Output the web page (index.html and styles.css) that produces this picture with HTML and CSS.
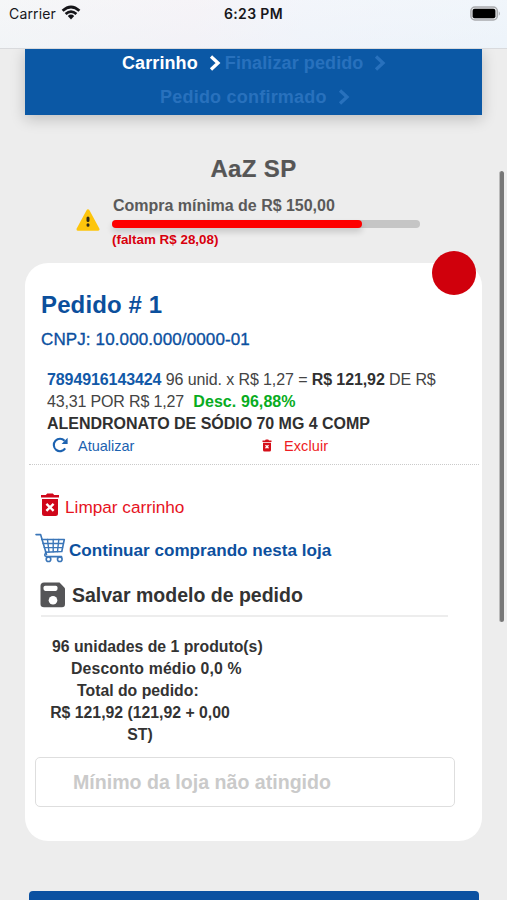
FILE: index.html
```html
<!DOCTYPE html>
<html lang="pt-BR">
<head>
<meta charset="utf-8">
<title>Carrinho</title>
<link rel="stylesheet" href="styles.css">
</head>
<body>
<header class="status">
  <div class="carrier"><span>Carrier</span>
    <svg class="wifi" width="20" height="16" viewBox="0 0 20 16"><g fill="none" stroke="#151519" stroke-width="2.8"><path d="M1.6 5.8Q10-1.8 18.4 5.8"/><path d="M4.6 9Q10 4.3 15.4 9"/></g><path fill="#151519" d="M6.8 11Q10 8.2 13.2 11L10 14.4Z"/></svg>
  </div>
  <span class="clock">6:23 PM</span>
  <svg class="battery" width="31" height="15" viewBox="0 0 31 15"><rect x=".9" y="1" width="26.4" height="13" rx="4" fill="#e4e6e8" stroke="#a9abae" stroke-width="1.5"/><rect x="2.6" y="2.8" width="22.8" height="9.4" rx="2" fill="#000"/><path d="M28.8 5.2Q31 7.5 28.8 9.8Z" fill="#a9abae"/></svg>
</header>
<main class="page">
  <nav class="steps">
    <div class="step-row"><span class="active">Carrinho</span><svg class="chev on" width="12" height="16" viewBox="0 0 12 16"><path d="M2 1.5L9 8L2 14.5"/></svg><span>Finalizar pedido</span><svg class="chev off" width="12" height="16" viewBox="0 0 12 16"><path d="M2 1.5L9 8L2 14.5"/></svg></div>
    <div class="step-row second"><span>Pedido confirmado</span><svg class="chev off" width="12" height="16" viewBox="0 0 12 16"><path d="M2 1.5L9 8L2 14.5"/></svg></div>
  </nav>
  <h1 class="store">AaZ SP</h1>
  <section class="minimum">
    <svg class="warn" width="24" height="22" viewBox="0 0 24 22"><path d="M12 1.8L22 20.2H2Z" fill="#fdc50c" stroke="#fdc50c" stroke-width="3" stroke-linejoin="round"/><path d="M12 9V11.4M12 15.8V16.2" stroke="#2d2817" stroke-width="3" stroke-linecap="round"/></svg>
    <div class="min-body">
      <p class="min-label">Compra mínima de R$ 150,00</p>
      <div class="track"><div class="fill" style="width:81.28%"></div></div>
      <p class="missing">(faltam R$ 28,08)</p>
    </div>
  </section>
  <section class="card">
    <span class="dot"></span>
    <h2>Pedido # 1</h2>
    <p class="cnpj">CNPJ: 10.000.000/0000-01</p>
    <div class="item">
      <p><b class="code">7894916143424</b> 96 unid. x R$ 1,27 = <b>R$ 121,92</b> DE R$<br><span class="price">43,31 POR R$ 1,27</span> <b class="discount">Desc. 96,88%</b><br><b class="name">ALENDRONATO DE SÓDIO 70 MG 4 COMP</b></p>
      <div class="actions">
        <a class="update"><svg width="17" height="17" viewBox="0 0 17 17"><path d="M13.2 11.4A6.2 6.2 0 1 1 12.6 3.8" fill="none" stroke="#1c62b0" stroke-width="2.1"/><path d="M15.6 .8V7H9.6Z" fill="#1c62b0"/></svg><span>Atualizar</span></a>
        <a class="remove"><svg width="10" height="13" viewBox="0 0 20 24"><path d="M1 2H6L7.5 0H12.5L14 2H19V5H1ZM2 6.5H18V21Q18 24 15 24H5Q2 24 2 21Z" fill="#d50f19"/><path d="M7 11.5L13 17.5M13 11.5L7 17.5" stroke="#fff" stroke-width="2.6"/></svg><span>Excluir</span></a>
      </div>
    </div>
    <a class="row clear"><svg width="18" height="24" viewBox="0 0 18 24"><path d="M0 2H4.8L6.2 .6H11.8L13.2 2H18V4.4H0ZM1 6H17V20.5Q17 23 14.5 23H3.5Q1 23 1 20.5Z" fill="#d0061a"/><path d="M5.4 10.8L12.6 17.8M12.6 10.8L5.4 17.8" stroke="#fff" stroke-width="2.4"/></svg><span>Limpar carrinho</span></a>
    <a class="row continue"><svg width="31" height="30" viewBox="0 0 31 30"><g fill="none" stroke="#3b76b8" stroke-width="1.6" stroke-linejoin="round" stroke-linecap="round"><path d="M1 1.6H5.6L11.5 21.5"/><path d="M6.8 6.5H29.3L26.8 18.5L10.5 19.2"/><path d="M8 10.5H28.4M9.2 14.6H27.5M12.5 6.5L14 19M18.2 6.5V18.8M23.8 6.5L22.5 18.6" stroke-width="1.4"/><path d="M11.5 19.3Q8 22.3 11.5 23.6H26.5"/><circle cx="13.5" cy="26.2" r="2.3"/><circle cx="24.8" cy="26.2" r="2.3"/></g></svg><span>Continuar comprando nesta loja</span></a>
    <a class="row save"><svg width="26" height="26" viewBox="0 0 26 26"><path d="M4 .5H19.5L25 6.3V22Q25 25.2 22 25.2H4Q.5 25.2 .5 22V4Q.5.5 4 .5Z" fill="#555557"/><rect x="3.5" y="3.7" width="14" height="5.2" rx="1.8" fill="#fff"/><circle cx="13" cy="18.2" r="4.3" fill="#fff"/></svg><span>Salvar modelo de pedido</span></a>
    <div class="totals">
      <p class="t1">96 unidades de 1 produto(s)</p>
      <p class="t2">Desconto médio 0,0 %</p>
      <p class="t3">Total do pedido:</p>
      <p class="t4">R$ 121,92 (121,92 + 0,00<br>ST)</p>
    </div>
    <button class="disabled" disabled>Mínimo da loja não atingido</button>
  </section>
  <div class="bottom-button"></div>
</main>
<div class="scrollbar"></div>
</body>
</html>
```
FILE: styles.css
```css
* { box-sizing: border-box; }
body { margin: 0; width: 507px; height: 900px; overflow: hidden; background: #ededed; color: #333; font-family: "Liberation Sans", Arial, sans-serif; }
p, h1, h2 { margin: 0; }
svg { display: block; flex: none; }

.status { position: relative; z-index: 2; height: 48px; padding: 5px 9px 0; display: grid; grid-template-columns: 1fr auto 1fr; align-items: start; background: linear-gradient(175deg, rgba(255,255,255,.35), rgba(236,243,250,.4)), linear-gradient(90deg, #f0f2f4, #f3eff4 38%, #eff2f9 60%, #eef4fa); box-shadow: 0 1px 0 #d9dadd; font-family: Inter, sans-serif; font-size: 14px; line-height: 18px; color: #17171b; }
.carrier { display: flex; letter-spacing: .15px; }
.wifi { margin: 0 0 0 5px; }
.clock { font-weight: 600; letter-spacing: .35px; }
.battery { justify-self: end; margin: 1px -3px 0 0; }

.page { height: 852px; overflow: hidden; }
.steps { margin: 0 25px; height: 67px; padding-top: 2px; background: #0b58a5; box-shadow: 0 4px 14px rgba(0,0,0,.2); color: #2871bd; font-size: 18px; font-weight: 700; }
.step-row { display: flex; align-items: center; height: 26px; padding-left: 97px; letter-spacing: .1px; }
.step-row.second { margin-top: 8px; padding-left: 135px; letter-spacing: .22px; }
.active { color: #fff; }
.chev path { fill: none; stroke: currentColor; stroke-width: 3.3; }
.chev { margin: -1px 0 0 11px; }
.on { color: #fff; margin-right: 4px; }

.store { margin-top: 38px; text-align: center; font-size: 24px; line-height: 32px; color: #565656; letter-spacing: .35px; -webkit-text-stroke: .2px #565656; }
.minimum { display: flex; margin: 11px 0 0 76px; }
.warn { margin-top: 13px; }
.min-body { width: 308px; margin-left: 12px; }
.min-label { padding-left: 1px; font-size: 16px; font-weight: 700; line-height: 20px; color: #5a5a5a; letter-spacing: -.02px; }
.track { height: 8px; margin-top: 4px; border-radius: 4px; background: #c5c5c5; }
.fill { height: 8px; border-radius: 4px; background: #fe0000; box-shadow: 0 4px 6px rgba(0,0,0,.16); }
.missing { position: relative; font-size: 13.4px; font-weight: 700; line-height: 20px; margin-top: 2px; color: #d8000d; }

.card { position: relative; height: 578px; margin: 13px 25px 0; padding: 26px 0 0 16px; background: #fff; border-radius: 23px; }
.dot { position: absolute; right: 6px; top: -12px; width: 44px; height: 44px; border-radius: 50%; background: #d0000c; }
h2 { font-size: 24px; line-height: 32px; letter-spacing: .12px; color: #0b4f9c; }
.cnpj { margin-top: 8px; font-size: 17px; line-height: 22px; letter-spacing: .12px; color: #0b509f; -webkit-text-stroke: .35px #0b509f; }
.item { margin: 18px 3px 0 -12px; padding-left: 18px; height: 96px; border-bottom: 1px dotted #cacaca; font-size: 16px; line-height: 22px; letter-spacing: -.1px; color: #444; white-space: nowrap; }
.item b { color: #303030; }
.item .name { letter-spacing: -.03px; }
.price { letter-spacing: -.16px; }
.item .code { color: #1259a8; }
.item .discount { color: #08ac1e; margin-left: 5px; letter-spacing: .08px; }
.actions { display: flex; height: 22px; font-size: 14.5px; letter-spacing: 0; }
.update, .remove { display: flex; align-items: center; }
.update { width: 215px; padding-left: 5px; color: #1c62b0; }
.update svg { margin-top: -2px; }
.update span { margin-left: 9px; }
.remove { color: #ee1c24; }
.remove svg { margin-top: -2px; }
.remove span { margin-left: 12px; letter-spacing: .1px; }

.row { display: flex; align-items: center; white-space: nowrap; }
.clear { height: 30px; margin-top: 25px; color: #e6131e; font-size: 17.2px; }
.clear span { margin: 4px 0 0 6px; }
.continue { height: 32px; margin: 12px 0 0 -6px; color: #0c509e; font-size: 17.1px; font-weight: 700; }
.continue span { margin: 6px 0 0 3px; }
.save { height: 49px; margin-right: 34px; margin-top: 4px; border-bottom: 2px solid #ededed; color: #333; font-size: 19.5px; font-weight: 700; }
.save svg { margin: 7px 0 0 -1px; }
.save span { margin: 7px 0 0 6px; }

.totals { padding-top: 19px; height: 140px; font-size: 15.8px; font-weight: 700; line-height: 22px; color: #333; }
.t1 { padding-left: 11px; }
.t2 { padding-left: 30px; letter-spacing: .15px; }
.t3 { padding-left: 36px; }
.t4 { width: 182px; margin-left: 8px; text-align: center; white-space: nowrap; }
.disabled { display: block; width: 420px; height: 50px; margin-left: -6px; padding: 0 0 0 37px; border: 1px solid #dedede; border-radius: 5px; background: #fff; color: #cacaca; font: 700 19.6px/48px "Liberation Sans", Arial, sans-serif; text-align: left; }
.bottom-button { height: 48px; margin: 50px 28px 0 29px; border-radius: 4px; background: #0b51a1; }
.scrollbar { position: absolute; left: 499px; top: 171px; width: 5px; height: 451px; border-radius: 3px; background: #777; border-left: 1px solid #bbb; }
```
